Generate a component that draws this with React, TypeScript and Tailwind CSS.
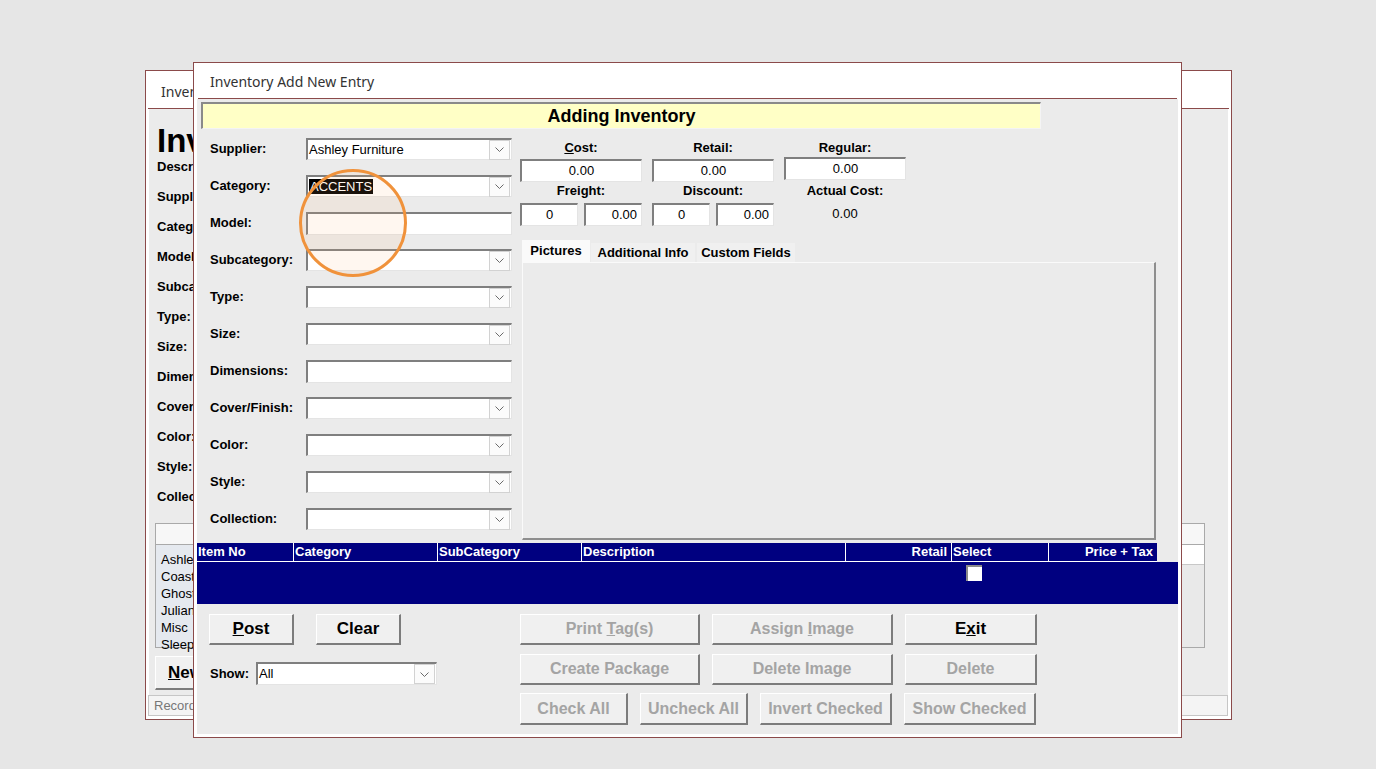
import React from 'react';

const Chevron = () => (
  <svg width="9" height="5" viewBox="0 0 9 5">
    <path d="M0.5 0.5 L4.5 4.5 L8.5 0.5" stroke="#6a6a6a" strokeWidth="1" fill="none" />
  </svg>
);

const sunken =
  'border-t-2 border-l-2 border-t-[#7f7f7f] border-l-[#7f7f7f] border-r border-b border-r-[#e4e4e4] border-b-[#e4e4e4] bg-white';

const Combo: React.FC<{ className?: string; value?: string; selected?: boolean }> = ({
  className = '',
  value,
  selected,
}) => (
  <div className={`flex h-[22px] items-center ${sunken} ${className}`}>
    <div className="flex-1 truncate pl-[1px] text-[13px] leading-[16px] text-black">
      {value && (selected ? <span className="bg-black px-[1px] text-white">{value}</span> : value)}
    </div>
    <div className="mr-[1px] flex h-[20px] w-[21px] items-center justify-center border border-[#d2d2d2] bg-[#fbfbfb]">
      <Chevron />
    </div>
  </div>
);

const TextBox: React.FC<{ className?: string; value?: string; align?: string }> = ({
  className = '',
  value,
  align = 'text-center',
}) => (
  <div className={`h-[23px] px-[4px] text-[13px] leading-[20px] text-black ${align} ${sunken} ${className}`}>
    {value}
  </div>
);

const WinButton: React.FC<{ className?: string; disabled?: boolean; children: React.ReactNode }> = ({
  className = '',
  disabled,
  children,
}) => (
  <div
    className={`flex items-center justify-center border-t border-l border-t-white border-l-white border-r-2 border-b-2 border-r-[#7c7c7c] border-b-[#7c7c7c] bg-[#f0f0f0] text-[16px] font-bold ${
      disabled ? 'text-[#a4a4a4]' : 'text-black'
    } ${className}`}
  >
    {children}
  </div>
);

const formRows: { label: string; kind: 'combo' | 'text'; value?: string; selected?: boolean }[] = [
  { label: 'Supplier:', kind: 'combo', value: 'Ashley Furniture' },
  { label: 'Category:', kind: 'combo', value: 'ACCENTS', selected: true },
  { label: 'Model:', kind: 'text' },
  { label: 'Subcategory:', kind: 'combo' },
  { label: 'Type:', kind: 'combo' },
  { label: 'Size:', kind: 'combo' },
  { label: 'Dimensions:', kind: 'text' },
  { label: 'Cover/Finish:', kind: 'combo' },
  { label: 'Color:', kind: 'combo' },
  { label: 'Style:', kind: 'combo' },
  { label: 'Collection:', kind: 'combo' },
];

const backLabels = [
  'Description:',
  'Supplier:',
  'Category:',
  'Model:',
  'Subcategory:',
  'Type:',
  'Size:',
  'Dimensions:',
  'Cover/Finish:',
  'Color:',
  'Style:',
  'Collection:',
];

const listItems = ['Ashley Furniture', 'Coaster', 'Ghost', 'Julian', 'Misc', 'Sleep'];

const columns = [
  { name: 'Item No', w: 'w-[96px]', right: false },
  { name: 'Category', w: 'w-[144px]', right: false },
  { name: 'SubCategory', w: 'w-[144px]', right: false },
  { name: 'Description', w: 'w-[264px]', right: false },
  { name: 'Retail', w: 'w-[106px]', right: true },
  { name: 'Select', w: 'w-[97px]', right: false },
  { name: 'Price + Tax', w: 'w-[109px]', right: true },
];

// the main inventory form sits behind the dialog; only its edges show
const BackWindow: React.FC = () => (
  <div className="absolute left-[145px] top-[70px] flex h-[650px] w-[1087px] flex-col border border-[#8b4a4a] bg-white p-[3px]">
    <div className="flex h-[34px] items-center pl-[12px] font-['Noto_Sans',sans-serif] text-[14px] text-[#333]">
      Inventory
    </div>
    <div className="-mx-[1px] h-px bg-[#8b4a4a]" />
    <div className="flex flex-1 flex-col bg-[#ebebeb] pl-[8px]">
      <div className="mt-[18px] h-[28px] text-[33px] font-bold leading-[28px] text-black">Inventory</div>
      <div className="flex flex-col gap-[6px]">
        {backLabels.map((l) => (
          <div key={l} className="flex h-[24px] items-center text-[13px] font-bold text-black">
            {l}
          </div>
        ))}
      </div>
      <div className="ml-[-2px] mt-[14px] h-[22px] w-[1050px] border border-[#a9a9a9] bg-[#f7f7f7]" />
      <div className="ml-[-2px] flex h-[103px] w-[1050px] border border-t-0 border-[#a9a9a9] bg-[#e5e9ef]">
        <div className="flex-1 pt-[6px] pl-[5px]">
          {listItems.map((i) => (
            <div key={i} className="h-[17px] text-[13px] leading-[17px] text-black">
              {i}
            </div>
          ))}
        </div>
        <div className="flex w-[24px] flex-col border-l border-[#c8c8c8]">
          <div className="h-[20px] border-b border-[#c8c8c8] bg-white" />
          <div className="flex-1 bg-[#e9e9e9]" />
        </div>
      </div>
      <WinButton className="ml-[-2px] mt-[8px] h-[34px] w-[62px] text-[17px]">
        <span>
          <span className="underline">N</span>ew
        </span>
      </WinButton>
      <div className="ml-[-9px] mt-[5px] flex h-[21px] w-[1080px] items-center border border-[#c6c6c6] bg-[#f4f4f4] pl-[5px] text-[13px] text-[#777]">
        Record: 1 of 6
      </div>
    </div>
  </div>
);

const Dialog: React.FC = () => (
  <div className="absolute left-[193px] top-[62px] flex h-[676px] w-[989px] flex-col border border-[#8b4a4a] bg-white p-[3px]">
    <div className="flex h-[32px] items-center pb-[2px] pl-[13px] font-['Noto_Sans',sans-serif] text-[14px] text-[#333]">
      Inventory Add New Entry
    </div>
    <div className="mx-[1px] h-px bg-[#8b4a4a]" />
    <div className="flex flex-1 flex-col bg-[#ebebeb]">
      <div className="ml-[4px] mt-[3px] flex h-[27px] w-[840px] items-center justify-center border-t-2 border-l-2 border-t-[#8a8a8a] border-l-[#8a8a8a] border-r border-b border-r-[#f4f4f4] border-b-[#f4f4f4] bg-[#ffffc6] text-[18px] font-bold text-black">
        Adding Inventory
      </div>

      <div className="flex items-start pl-[13px]">
        <div className="flex flex-col gap-[15px] pt-[9px]">
          {formRows.map((r) => (
            <div key={r.label} className="flex h-[22px] items-center">
              <div className="w-[96px] text-[13px] font-bold text-black">{r.label}</div>
              {r.kind === 'combo' ? (
                <Combo className="w-[206px]" value={r.value} selected={r.selected} />
              ) : (
                <div className={`h-[23px] w-[206px] ${sunken}`} />
              )}
            </div>
          ))}
        </div>

        <div className="ml-[8px] flex w-[636px] flex-col pt-[11px]">
          <div className="grid w-[386px] grid-cols-[122px_122px_122px] gap-x-[10px] text-[13px] font-bold text-black">
            <div className="h-[15px] text-center leading-[15px]">
              <span className="underline">C</span>ost:
            </div>
            <div className="h-[15px] text-center leading-[15px]">Retail:</div>
            <div className="h-[15px] text-center leading-[15px]">Regular:</div>
          </div>
          <div className="mt-[4px] grid w-[386px] grid-cols-[122px_122px_122px] gap-x-[10px]">
            <TextBox value="0.00" />
            <TextBox value="0.00" />
            <TextBox value="0.00" className="-mt-[2px]" />
          </div>
          <div className="mt-[1px] grid w-[386px] grid-cols-[122px_122px_122px] gap-x-[10px] text-[13px] font-bold text-black">
            <div className="h-[15px] text-center leading-[15px]">Freight:</div>
            <div className="h-[15px] text-center leading-[15px]">Discount:</div>
            <div className="h-[15px] text-center leading-[15px]">Actual Cost:</div>
          </div>
          <div className="mt-[5px] grid w-[386px] grid-cols-[122px_122px_122px] gap-x-[10px]">
            <div className="flex gap-[6px]">
              <TextBox value="0" className="w-[58px]" />
              <TextBox value="0.00" align="text-right" className="w-[58px]" />
            </div>
            <div className="flex gap-[6px]">
              <TextBox value="0" className="w-[58px]" />
              <TextBox value="0.00" align="text-right" className="w-[58px]" />
            </div>
            <div className="h-[23px] text-center text-[13px] leading-[21px] text-black">0.00</div>
          </div>

          <div className="ml-[2px] mt-[14px] flex h-[22px] items-end text-[13px] font-bold text-black">
            <div className="flex h-[22px] w-[68px] items-center justify-center bg-[#fafafa]">Pictures</div>
            <div className="ml-px flex h-[19px] w-[104px] items-center justify-center bg-[#f0f0f0]">Additional Info</div>
            <div className="ml-[2px] flex h-[19px] w-[98px] items-center justify-center bg-[#f0f0f0]">Custom Fields</div>
          </div>
          <div className="ml-[2px] h-[278px] w-[634px] border-t border-l border-t-[#fafafa] border-l-[#fafafa] border-r-2 border-b-2 border-r-[#8e8e8e] border-b-[#8e8e8e] bg-[#ebebeb]" />
        </div>
      </div>

      <div className="mt-[3px] flex h-[19px] w-[960px] border-b border-white bg-[#000080] text-[13px] font-bold leading-[18px] text-white">
        {columns.map((c, i) => (
          <div
            key={c.name}
            className={`${c.w} ${i > 0 ? 'border-l border-white' : ''} ${c.right ? 'pr-[4px] text-right' : 'pl-[1px]'}`}
          >
            {c.name}
          </div>
        ))}
      </div>
      <div className="flex h-[42px] w-full bg-[#000080]">
        <div className="w-[754px]" />
        <div className="pl-[15px] pt-[3px]">
          <div className="h-[16px] w-[16px] border-t-2 border-l-2 border-t-[#8a8a8a] border-l-[#8a8a8a] bg-white" />
        </div>
      </div>

      <div className="mt-[10px] flex">
        <div className="ml-[12px] flex w-[311px] flex-col">
          <div className="flex gap-[22px]">
            <WinButton className="h-[31px] w-[85px] text-[17px]">
              <span>
                <span className="underline">P</span>ost
              </span>
            </WinButton>
            <WinButton className="h-[31px] w-[85px] text-[17px]">Clear</WinButton>
          </div>
          <div className="mt-[17px] flex items-center">
            <div className="w-[47px] pl-px text-[13px] font-bold text-black">Show:</div>
            <Combo className="h-[23px] w-[181px]" value="All" />
          </div>
        </div>
        <div className="flex flex-col gap-[9px]">
          <div className="flex gap-[12px]">
            <WinButton disabled className="h-[31px] w-[180px]">
              <span>
                Print <span className="underline">T</span>ag(s)
              </span>
            </WinButton>
            <WinButton disabled className="h-[31px] w-[181px]">
              <span>
                Assign <span className="underline">I</span>mage
              </span>
            </WinButton>
            <WinButton className="h-[31px] w-[132px] text-[17px]">
              <span>
                E<span className="underline">x</span>it
              </span>
            </WinButton>
          </div>
          <div className="flex gap-[12px]">
            <WinButton disabled className="h-[31px] w-[180px]">Create Package</WinButton>
            <WinButton disabled className="h-[31px] w-[181px]">Delete Image</WinButton>
            <WinButton disabled className="h-[31px] w-[132px]">Delete</WinButton>
          </div>
          <div className="-mt-px flex gap-[12px]">
            <WinButton disabled className="h-[32px] w-[108px]">Check All</WinButton>
            <WinButton disabled className="h-[32px] w-[108px]">Uncheck All</WinButton>
            <WinButton disabled className="h-[32px] w-[132px]">Invert Checked</WinButton>
            <WinButton disabled className="h-[32px] w-[132px]">Show Checked</WinButton>
          </div>
        </div>
      </div>
    </div>
  </div>
);

export default function App() {
  return (
    <div className="relative h-[769px] w-[1376px] overflow-hidden bg-[#e6e6e6] font-['Liberation_Sans',Arial,sans-serif]">
      <BackWindow />
      <Dialog />
      {/* highlight marker drawn over the form */}
      <div className="absolute left-[299px] top-[169px] h-[108px] w-[108px] rounded-full border-[3px] border-[#f0923b] bg-[#ffb070]/10" />
    </div>
  );
}
